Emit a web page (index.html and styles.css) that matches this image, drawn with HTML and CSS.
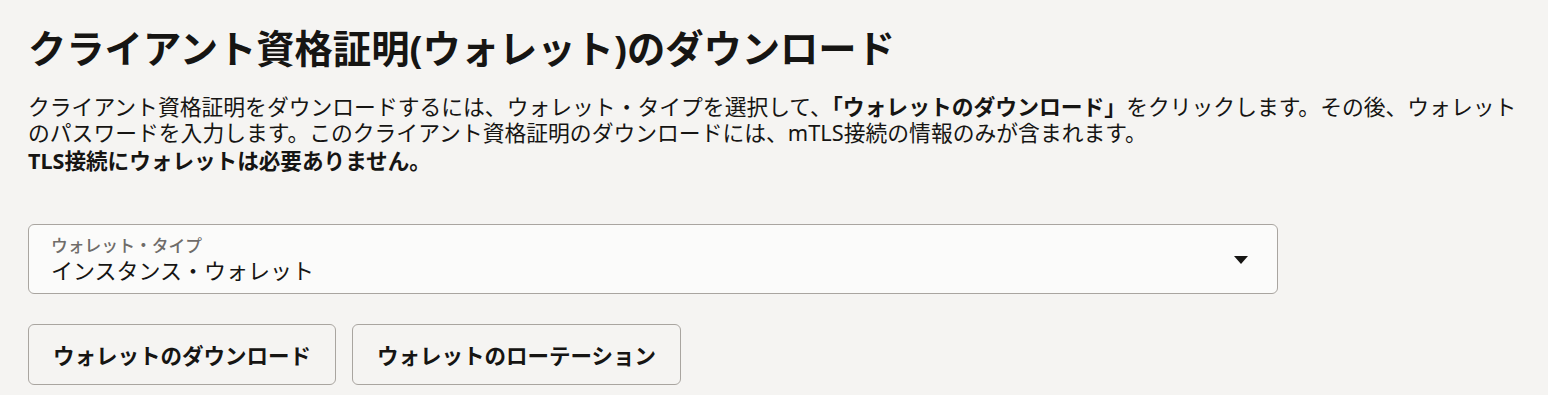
FILE: index.html
```html
<!DOCTYPE html>
<html lang="ja">
<head>
<meta charset="utf-8">
<link rel="stylesheet" href="styles.css">
</head>
<body>
<main class="page">
  <h1 class="title">クライアント資格証明(ウォレット)のダウンロード</h1>
  <p class="desc">クライアント資格証明をダウンロードするには、ウォレット・タイプを選択して、<strong>「ウォレットのダウンロード」</strong>をクリックします。その後、ウォレットのパスワードを入力します。このクライアント資格証明のダウンロードには、mTLS接続の情報のみが含まれます。</p>
  <p class="note">TLS接続にウォレットは必要ありません。</p>
  <div class="select">
    <div class="select-text">
      <span class="select-label">ウォレット・タイプ</span>
      <span class="select-value">インスタンス・ウォレット</span>
    </div>
    <svg class="caret" width="14" height="8" viewBox="0 0 14 8"><path d="M0 0 L14 0 L7 8 Z" fill="#161513"/></svg>
  </div>
  <div class="actions">
    <button class="btn">ウォレットのダウンロード</button>
    <button class="btn">ウォレットのローテーション</button>
  </div>
</main>
</body>
</html>
```
FILE: styles.css
```css
* { box-sizing: border-box; }
html, body { margin: 0; padding: 0; }
body {
  background: #f5f4f2;
  color: #161513;
  font-family: "Noto Sans", "Noto Sans CJK JP", sans-serif;
}
.page {
  padding: 20px 28px 0 28px;
  width: 1548px;
}
.title {
  margin: 0;
  font-size: 38.3px;
  line-height: 56px;
  font-weight: 700;
}
.desc {
  margin: 18px 0 0 0;
  font-size: 21.8px;
  line-height: 26px;
  font-weight: 400;
}
.desc strong { font-weight: 700; }
.note {
  margin: 2px 0 0 0;
  font-size: 21.6px;
  line-height: 26px;
  font-weight: 700;
}
.select {
  margin-top: 50px;
  width: 1250px;
  height: 70px;
  border: 1px solid #a9a5a0;
  border-radius: 6px;
  background: #fbfbfa;
  display: flex;
  align-items: center;
  justify-content: space-between;
  padding: 0 29px 0 22px;
}
.select-text {
  display: flex;
  flex-direction: column;
  padding-top: 2px;
}
.select-label {
  font-size: 16.8px;
  line-height: 20px;
  color: #6f6c69;
  font-weight: 500;
}
.select-value {
  font-size: 22px;
  line-height: 28px;
}
.caret { margin-top: 2px; }
.actions {
  margin-top: 30px;
  display: flex;
  gap: 16px;
}
.btn {
  height: 61px;
  padding: 0 24px;
  border: 1px solid #a9a5a0;
  border-radius: 6px;
  background: #f5f4f2;
  color: #161513;
  font-family: inherit;
  font-size: 21.5px;
  font-weight: 700;
}
```
